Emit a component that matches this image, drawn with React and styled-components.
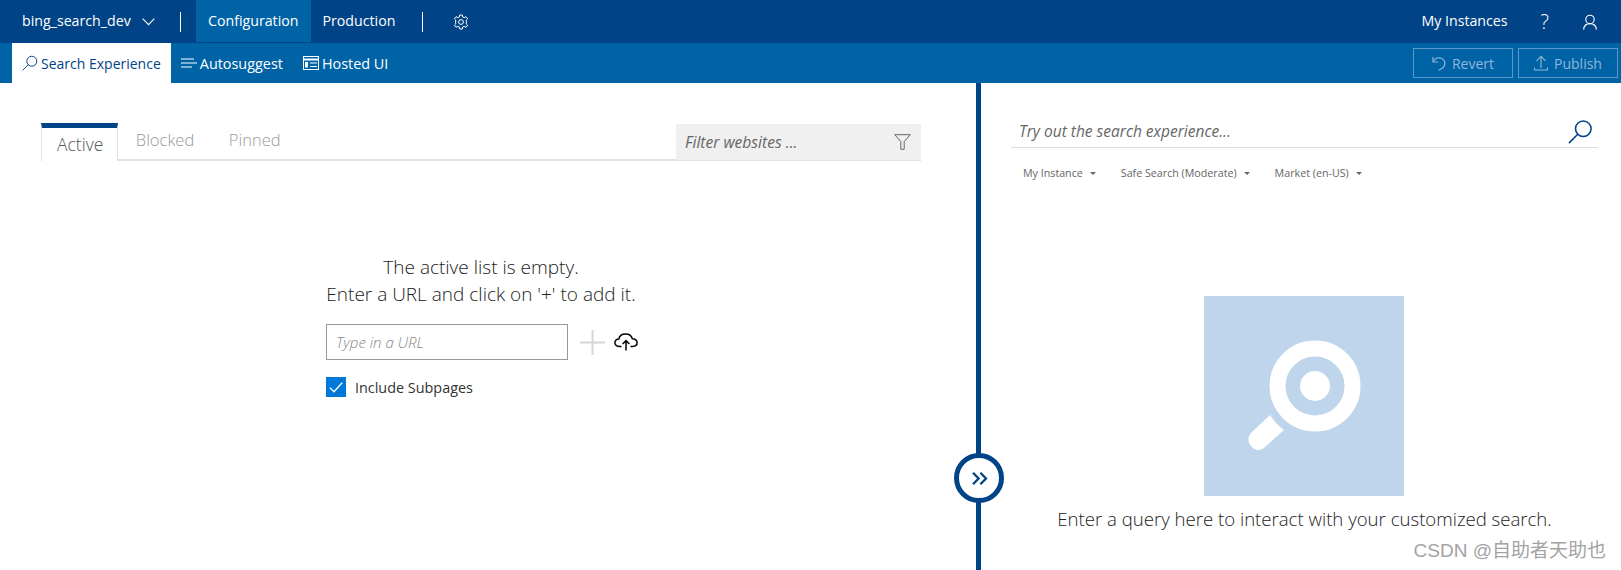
import React from 'react'
import styled, { createGlobalStyle } from 'styled-components'

const GlobalStyle = createGlobalStyle`
    html, body {
        margin: 0;
        padding: 0;
        background: #fff;
        font-family: "Open Sans", "Noto Sans", "Liberation Sans", sans-serif;
    }
    * {
        box-sizing: border-box;
    }
`

function SearchIcon({ size = 18, color = '#fff', width = 1.3 }) {
    return (
        <svg width={size} height={size} viewBox="0 0 18 18" fill="none" stroke={color} strokeWidth={width}>
            <circle cx="11" cy="7" r="5.6" />
            <path d="M7 11 L1 17" strokeLinecap="round" />
        </svg>
    )
}

function App() {
    return (
        <>
            <GlobalStyle />
            <Page>
                <TopBar>
                    <InstanceName>bing_search_dev</InstanceName>
                    <svg width="13" height="8" viewBox="0 0 13 8" fill="none" stroke="#fff" strokeWidth="1.1">
                        <path d="M0.7 0.7 L6.5 6.6 L12.3 0.7" />
                    </svg>
                    <Separator $left={25} />
                    <TopTab $active>Configuration</TopTab>
                    <TopTab>Production</TopTab>
                    <Separator $left={15} />
                    <GearWrap>
                        <svg width="16" height="16" viewBox="0 0 16 16" fill="none" stroke="#fff" strokeWidth="1">
                            <circle cx="8" cy="8" r="2.4" />
                            <path d="M6.7 1 H9.3 L9.7 3 L11.2 3.7 L13 2.7 L14.6 4.8 L13.2 6.2 L13.4 8 L13.2 9.8 L14.6 11.2 L13 13.3 L11.2 12.3 L9.7 13 L9.3 15 H6.7 L6.3 13 L4.8 12.3 L3 13.3 L1.4 11.2 L2.8 9.8 L2.6 8 L2.8 6.2 L1.4 4.8 L3 2.7 L4.8 3.7 L6.3 3 Z" strokeLinejoin="round" />
                        </svg>
                    </GearWrap>
                    <TopRight>
                        <TopLink>My Instances</TopLink>
                        <HelpMark>?</HelpMark>
                        <svg width="16" height="16" viewBox="0 0 16 16" fill="none" stroke="#fff" strokeWidth="1.1">
                            <circle cx="8" cy="5.4" r="4.2" />
                            <path d="M1.6 15.6 C2 11.6 4.6 9.6 8 9.6 C11.4 9.6 14 11.6 14.4 15.6" />
                        </svg>
                    </TopRight>
                </TopBar>
                <SubBar>
                    <SubTab $active>
                        <SearchIcon size={16} color="#004386" width={1.1} />
                        Search Experience
                    </SubTab>
                    <SubTab>
                        <svg width="16" height="10" viewBox="0 0 16 10" fill="none" stroke="#fff" strokeWidth="1.2">
                            <path d="M0 1 H13 M0 5 H16 M0 9 H11" />
                        </svg>
                        Autosuggest
                    </SubTab>
                    <SubTab>
                        <svg width="16" height="14" viewBox="0 0 16 14" fill="none" stroke="#fff" strokeWidth="1">
                            <rect x="0.5" y="0.5" width="15" height="13" />
                            <path d="M1 3.5 H15" strokeWidth="2" />
                            <path d="M7 7 H14 M7 10.5 H14" />
                            <rect x="2" y="6" width="3" height="5.5" fill="#fff" stroke="none" />
                        </svg>
                        Hosted UI
                    </SubTab>
                    <SubActions>
                        <ActionButton>
                            <svg width="14" height="15" viewBox="0 0 14 15" fill="none" stroke="#8fb7d9" strokeWidth="1.2">
                                <path d="M1 1 V6 H6" />
                                <path d="M1.2 5.8 C3 2.6 5.5 1.6 7.6 1.8 C11 2.2 13 4.8 12.8 7.8 C12.6 10.8 10.4 13 6.5 14.2" />
                            </svg>
                            Revert
                        </ActionButton>
                        <ActionButton>
                            <svg width="14" height="16" viewBox="0 0 14 16" fill="none" stroke="#8fb7d9" strokeWidth="1.1">
                                <path d="M7 13 V1.5 M2.6 5.8 L7 1.2 L11.4 5.8 M0.5 12.5 V15 H13.5 V12.5" />
                            </svg>
                            Publish
                        </ActionButton>
                    </SubActions>
                </SubBar>
                <Main>
                    <LeftPane>
                        <TabRow>
                            <ListTab $active>Active</ListTab>
                            <ListTab>Blocked</ListTab>
                            <ListTab>Pinned</ListTab>
                            <FilterBox>
                                <FilterText>Filter websites ...</FilterText>
                                <svg width="17" height="16" viewBox="0 0 17 16" fill="none" stroke="#666" strokeWidth="1">
                                    <path d="M0.7 0.7 H16.3 L10.2 7.5 V15.3 H6.8 V7.5 Z" />
                                </svg>
                            </FilterBox>
                        </TabRow>
                        <EmptyState>
                            <EmptyMessage>
                                The active list is empty.
                                <br />
                                Enter a URL and click on '+' to add it.
                            </EmptyMessage>
                            <UrlRow>
                                <UrlInput>Type in a URL</UrlInput>
                                <svg width="25" height="25" viewBox="0 0 25 25" stroke="#d6d6d6" strokeWidth="2">
                                    <path d="M12.5 0 V25 M0 12.5 H25" />
                                </svg>
                                <CloudIcon width="24" height="18" viewBox="0 0 24 18" fill="none" stroke="#000" strokeWidth="1.5">
                                    <path d="M7.5 13.5 H5.5 C2.8 13.5 0.9 11.9 0.9 9.6 C0.9 7.4 2.6 5.9 4.8 5.9 C5.5 3 8.4 1 11.6 1 C14.8 1 17.6 3 18.4 5.8 C21 5.7 23.1 7.3 23.1 9.6 C23.1 11.9 21.2 13.5 18.5 13.5 H16.5" />
                                    <path d="M12 17.5 V8 M8.6 11 L12 7.6 L15.4 11" />
                                </CloudIcon>
                            </UrlRow>
                            <CheckRow>
                                <CheckBox>
                                    <svg width="14" height="11" viewBox="0 0 14 11" fill="none" stroke="#fff" strokeWidth="1.3">
                                        <path d="M0.8 5.6 L5 9.8 L13.2 0.8" />
                                    </svg>
                                </CheckBox>
                                Include Subpages
                            </CheckRow>
                        </EmptyState>
                    </LeftPane>
                    <Divider>
                        <ToggleButton>
                            <svg width="16" height="13" viewBox="0 0 16 13" fill="none" stroke="#004386" strokeWidth="2.3">
                                <path d="M1 0.8 L6.6 6.5 L1 12.2 M8.4 0.8 L14 6.5 L8.4 12.2" />
                            </svg>
                        </ToggleButton>
                    </Divider>
                    <RightPane>
                        <TrySearch>
                            <TryText>Try out the search experience...</TryText>
                            <SearchIcon size={25} color="#004386" width={1.1} />
                        </TrySearch>
                        <DropdownRow>
                            <Dropdown>My Instance</Dropdown>
                            <Dropdown>Safe Search (Moderate)</Dropdown>
                            <Dropdown>Market (en-US)</Dropdown>
                        </DropdownRow>
                        <Illustration>
                            <svg width="200" height="200" viewBox="0 0 200 200">
                                <circle cx="111" cy="90" r="37.5" fill="none" stroke="#fff" strokeWidth="16" />
                                <circle cx="111" cy="90" r="15" fill="#fff" />
                                <path d="M66 119 L48 136 C44 140 43 145 47 150 C51 155 57 155 61 151 L80 134 C74 130 70 125 66 119 Z" fill="#fff" />
                            </svg>
                        </Illustration>
                        <QueryHint>Enter a query here to interact with your customized search.</QueryHint>
                    </RightPane>
                </Main>
                <Watermark>CSDN @自助者天助也</Watermark>
            </Page>
        </>
    )
}

const Page = styled.div`
    position: relative;
    width: 1621px;
    height: 570px;
    overflow: hidden;
`

const TopBar = styled.div`
    display: flex;
    align-items: center;
    height: 43px;
    padding-left: 22px;
    background: #004386;
    color: #fff;
    font-size: 14.2px;
`

const InstanceName = styled.div`
    width: 120px;
    padding-bottom: 2px;
`

const Separator = styled.div`
    width: 1px;
    height: 20px;
    margin-left: ${props => props.$left}px;
    background: #fff;
`

const TopTab = styled.div`
    display: flex;
    align-items: center;
    height: 42px;
    align-self: flex-start;
    padding: 0 12px 1px;
    margin-left: ${props => props.$active ? '15px' : '0'};
    background: ${props => props.$active ? '#0063a6' : 'transparent'};
`

const GearWrap = styled.div`
    display: flex;
    margin-left: 30px;
`

const TopRight = styled.div`
    display: flex;
    align-items: center;
    margin-left: auto;
    padding-right: 23px;
`

const TopLink = styled.div`
    margin-right: 33px;
    padding-bottom: 2px;
`

const HelpMark = styled.div`
    margin-right: 33px;
    font-size: 20px;
    font-weight: 300;
`

const SubBar = styled.div`
    display: flex;
    height: 40px;
    padding: 0 3px 0 12px;
    background: #0063a6;
    color: #fff;
    font-size: 14.4px;
`

const SubTab = styled.div`
    display: flex;
    align-items: center;
    gap: 3px;
    padding: 0 10px;
    background: ${props => props.$active ? '#fff' : 'transparent'};
    color: ${props => props.$active ? '#004386' : '#fff'};
    font-size: ${props => props.$active ? '14px' : '14.4px'};
`

const SubActions = styled.div`
    display: flex;
    gap: 5px;
    margin-left: auto;
    padding-top: 5px;
`

const ActionButton = styled.div`
    display: flex;
    align-items: center;
    justify-content: center;
    gap: 6px;
    width: 100px;
    height: 30px;
    border: 1px solid #5b98c8;
    color: #8fb7d9;
    font-size: 14px;
`

const Main = styled.div`
    display: flex;
    height: 487px;
`

const LeftPane = styled.div`
    width: 976px;
    padding: 40px 55px 0 41px;
`

const TabRow = styled.div`
    display: flex;
    height: 38px;
    border-bottom: 2px solid #e1e1e1;
`

const ListTab = styled.div`
    display: flex;
    align-items: ${props => props.$active ? 'center' : 'flex-start'};
    height: ${props => props.$active ? '38px' : '36px'};
    padding: ${props => props.$active ? '0 14px 2px 15px' : '5px 17px 0 17.5px'};
    border-top: ${props => props.$active ? '5px solid #004386' : 'none'};
    border-left: ${props => props.$active ? '1px solid #e1e1e1' : 'none'};
    border-right: ${props => props.$active ? '1px solid #e1e1e1' : 'none'};
    background: #fff;
    color: ${props => props.$active ? '#555' : '#999'};
    font-size: ${props => props.$active ? '17.5px' : '16.5px'};
    font-weight: 300;
`

const FilterBox = styled.div`
    display: flex;
    align-items: center;
    justify-content: space-between;
    width: 245px;
    height: 36px;
    margin: 1px 0 0 auto;
    padding: 0 10px 0 9px;
    background: #f0f0f0;
`

const FilterText = styled.div`
    color: #666;
    font-size: 15.6px;
    font-style: italic;
`

const EmptyState = styled.div`
    display: flex;
    flex-direction: column;
    width: 330px;
    margin: 93px 0 0 285px;
`

const EmptyMessage = styled.div`
    color: #222;
    font-size: 19px;
    font-weight: 300;
    line-height: 27px;
    text-align: center;
    width: 310px;
`

const UrlRow = styled.div`
    display: flex;
    align-items: center;
    gap: 10px;
    margin-top: 16px;
`

const UrlInput = styled.div`
    display: flex;
    align-items: center;
    width: 242px;
    height: 36px;
    margin-right: 2px;
    padding-left: 9px;
    border: 1px solid #999;
    color: #888;
    font-size: 15px;
    font-style: italic;
    font-weight: 300;
`

const CloudIcon = styled.svg`
    margin-left: -1px;
`

const CheckRow = styled.div`
    display: flex;
    align-items: center;
    gap: 9px;
    margin-top: 17px;
    color: #333;
    font-size: 14.4px;
`

const CheckBox = styled.div`
    display: flex;
    align-items: center;
    justify-content: center;
    width: 20px;
    height: 20px;
    background: #0078d7;
`

const Divider = styled.div`
    position: relative;
    width: 5px;
    background: #004386;
`

const ToggleButton = styled.div`
    position: absolute;
    left: -22px;
    top: 370px;
    display: flex;
    align-items: center;
    justify-content: center;
    width: 50px;
    height: 50px;
    padding-left: 2px;
    border: 5px solid #004386;
    border-radius: 50%;
    background: #fff;
`

const RightPane = styled.div`
    display: flex;
    flex-direction: column;
    flex: 1;
    padding: 29px 23px 0 30px;
`

const TrySearch = styled.div`
    display: flex;
    align-items: center;
    justify-content: space-between;
    height: 36px;
    padding: 4px 5px 0 8px;
    border-bottom: 1px solid #ddd;
`

const TryText = styled.div`
    color: #666;
    font-size: 15.5px;
    font-style: italic;
    padding-bottom: 2px;
`

const DropdownRow = styled.div`
    display: flex;
    gap: 25px;
    margin-top: 17px;
    padding-left: 12px;
`

const Dropdown = styled.div`
    display: flex;
    align-items: center;
    color: #666;
    font-size: 10.7px;
    line-height: 16px;
    &::after {
        content: '';
        margin-left: 7px;
        border-left: 3px solid transparent;
        border-right: 3px solid transparent;
        border-top: 3px solid #666;
    }
`

const Illustration = styled.div`
    align-self: center;
    display: flex;
    width: 200px;
    height: 200px;
    margin-top: 115px;
    margin-right: 2px;
    background: #bed5eb;
`

const QueryHint = styled.div`
    margin-top: 11px;
    color: #222;
    font-size: 18.6px;
    font-weight: 300;
    line-height: 24px;
    text-align: center;
    white-space: nowrap;
`

const Watermark = styled.div`
    position: absolute;
    right: 15px;
    bottom: 7px;
    color: #a3a3a3;
    font-family: "Liberation Sans", "Noto Sans CJK SC", sans-serif;
    font-size: 19px;
    line-height: 24px;
`

export default App
